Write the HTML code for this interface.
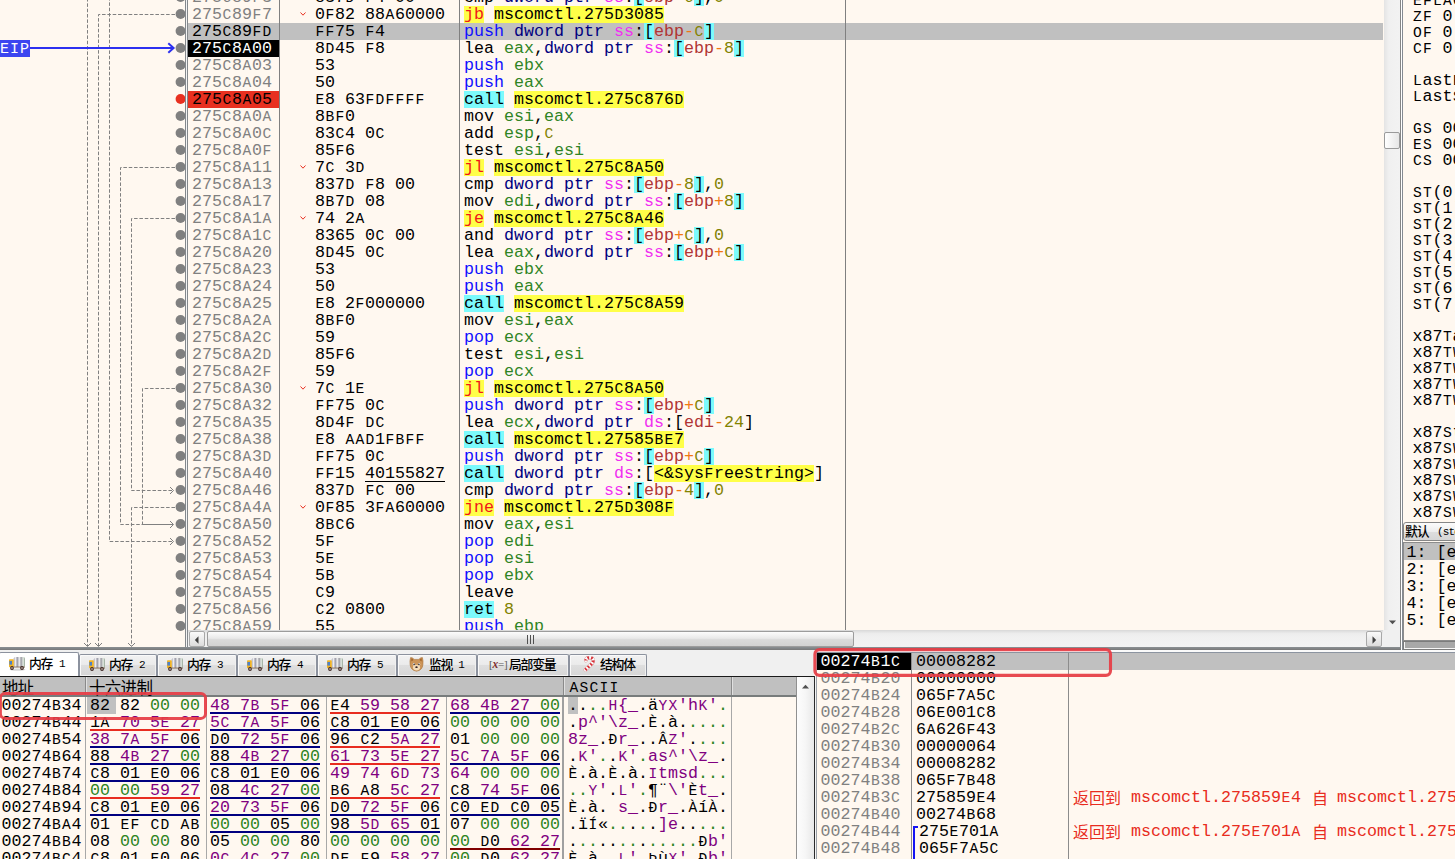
<!DOCTYPE html><html><head><meta charset="utf-8"><title>x32dbg</title><style>
*{box-sizing:border-box}
html,body{margin:0;padding:0}
body{width:1455px;height:859px;overflow:hidden;background:#FFF8F0;position:relative;
 font-family:"Liberation Mono",monospace;font-size:16.67px;color:#000}
.abs{position:absolute}
b{font-weight:normal;font-size:14.6px;letter-spacing:1.24px;position:relative;left:0.55px}
.row{position:absolute;left:0;height:17px;width:1455px}
.c{position:absolute;top:0;height:17px;line-height:17px;overflow:hidden;white-space:pre}
.ad{left:188px;width:91px;padding-left:4px;color:#808080}
.by{left:315px;width:144px}
.di{left:464px;width:381px}
.jm{position:absolute;left:299.7px;top:6.3px;width:6px;height:4px}
.vl{position:absolute;width:1px;background:#808080}
.hl{position:absolute;height:1px;background:#808080}
.b{color:#1010FF}
.r{color:#2F8424}
.m{color:#000080}
.s{color:#F030F0}
.k{background:#7CFAFC}
.y{background:#FFFF48}
.j{background:#FFFF48;color:#F01818}
.e{color:#B03434}
.o{color:#F27711}
.v{color:#828200}
.u{text-decoration:underline;text-underline-offset:4px;text-decoration-thickness:1px}
.reg{position:absolute;left:1412.5px;height:16px;line-height:16px;white-space:pre}
.g{color:#2C8422}
.p{color:#800080}
.dr{position:absolute;left:0;height:17px;width:797px}
.dc{position:absolute;top:0;height:17px;line-height:17px;white-space:pre;overflow:hidden}
.ul{position:absolute;top:15px;height:2px;width:110px}
.sr{position:absolute;left:816px;height:17px;width:639px}
.cjm{font-family:"Liberation Sans","Noto Sans CJK SC",sans-serif;font-weight:500}
.cjr{font-family:"Liberation Sans","Noto Sans CJK SC",sans-serif;font-weight:normal}
</style></head><body>
<div class="abs" style="left:0;top:0;width:1400px;height:630px;overflow:hidden">
<div class="row" style="top:-11px">
<div class="c ad" style="">275<b>C</b>89<b>F</b>3</div>
<div class="c by">837<b>D</b> <b>F</b>4 00</div>
<div class="c di">cmp <span class="m">dword ptr</span> <span class="s">ss</span>:<span class="k">[</span><span class="e">ebp</span><span class="o">-</span><span class="v"><b>C</b></span><span class="k">]</span>,<span class="v">0</span></div>
</div>
<div class="row" style="top:6px">
<div class="c ad" style="">275<b>C</b>89<b>F</b>7</div>
<svg class="jm" viewBox="0 0 6 4"><path d="M0.5 0.5 L3 3.2 L5.5 0.5" fill="none" stroke="#E83020" stroke-width="1"/></svg>
<div class="c by">0<b>F</b>82 88<b>A</b>60000</div>
<div class="c di"><span class="j">jb</span> <span class="y">mscomctl.275<b>D</b>3085</span></div>
</div>
<div class="abs" style="left:188px;top:23px;width:1195px;height:17px;background:#C0C0C0"></div>
<div class="row" style="top:23px">
<div class="c ad" style="color:#000;">275<b>C</b>89<b>FD</b></div>
<div class="c by"><b>FF</b>75 <b>F</b>4</div>
<div class="c di"><span class="b">push</span> <span class="m">dword ptr</span> <span class="s">ss</span>:<span class="k">[</span><span class="e">ebp</span><span class="o">-</span><span class="v"><b>C</b></span><span class="k">]</span></div>
</div>
<div class="row" style="top:40px">
<div class="c ad" style="background:#000;color:#fff;">275<b>C</b>8<b>A</b>00</div>
<div class="c by">8<b>D</b>45 <b>F</b>8</div>
<div class="c di">lea <span class="r">eax</span>,<span class="m">dword ptr</span> <span class="s">ss</span>:<span class="k">[</span><span class="e">ebp</span><span class="o">-</span><span class="v">8</span><span class="k">]</span></div>
</div>
<div class="row" style="top:57px">
<div class="c ad" style="">275<b>C</b>8<b>A</b>03</div>
<div class="c by">53</div>
<div class="c di"><span class="b">push</span> <span class="r">ebx</span></div>
</div>
<div class="row" style="top:74px">
<div class="c ad" style="">275<b>C</b>8<b>A</b>04</div>
<div class="c by">50</div>
<div class="c di"><span class="b">push</span> <span class="r">eax</span></div>
</div>
<div class="row" style="top:91px">
<div class="c ad" style="background:#E83020;color:#000;">275<b>C</b>8<b>A</b>05</div>
<div class="c by"><b>E</b>8 63<b>FDFFFF</b></div>
<div class="c di"><span class="k">call</span> <span class="y">mscomctl.275<b>C</b>876<b>D</b></span></div>
</div>
<div class="row" style="top:108px">
<div class="c ad" style="">275<b>C</b>8<b>A</b>0<b>A</b></div>
<div class="c by">8<b>BF</b>0</div>
<div class="c di">mov <span class="r">esi</span>,<span class="r">eax</span></div>
</div>
<div class="row" style="top:125px">
<div class="c ad" style="">275<b>C</b>8<b>A</b>0<b>C</b></div>
<div class="c by">83<b>C</b>4 0<b>C</b></div>
<div class="c di">add <span class="r">esp</span>,<span class="v"><b>C</b></span></div>
</div>
<div class="row" style="top:142px">
<div class="c ad" style="">275<b>C</b>8<b>A</b>0<b>F</b></div>
<div class="c by">85<b>F</b>6</div>
<div class="c di">test <span class="r">esi</span>,<span class="r">esi</span></div>
</div>
<div class="row" style="top:159px">
<div class="c ad" style="">275<b>C</b>8<b>A</b>11</div>
<svg class="jm" viewBox="0 0 6 4"><path d="M0.5 0.5 L3 3.2 L5.5 0.5" fill="none" stroke="#E83020" stroke-width="1"/></svg>
<div class="c by">7<b>C</b> 3<b>D</b></div>
<div class="c di"><span class="j">jl</span> <span class="y">mscomctl.275<b>C</b>8<b>A</b>50</span></div>
</div>
<div class="row" style="top:176px">
<div class="c ad" style="">275<b>C</b>8<b>A</b>13</div>
<div class="c by">837<b>D</b> <b>F</b>8 00</div>
<div class="c di">cmp <span class="m">dword ptr</span> <span class="s">ss</span>:<span class="k">[</span><span class="e">ebp</span><span class="o">-</span><span class="v">8</span><span class="k">]</span>,<span class="v">0</span></div>
</div>
<div class="row" style="top:193px">
<div class="c ad" style="">275<b>C</b>8<b>A</b>17</div>
<div class="c by">8<b>B</b>7<b>D</b> 08</div>
<div class="c di">mov <span class="r">edi</span>,<span class="m">dword ptr</span> <span class="s">ss</span>:<span class="k">[</span><span class="e">ebp</span><span class="o">+</span><span class="v">8</span><span class="k">]</span></div>
</div>
<div class="row" style="top:210px">
<div class="c ad" style="">275<b>C</b>8<b>A</b>1<b>A</b></div>
<svg class="jm" viewBox="0 0 6 4"><path d="M0.5 0.5 L3 3.2 L5.5 0.5" fill="none" stroke="#E83020" stroke-width="1"/></svg>
<div class="c by">74 2<b>A</b></div>
<div class="c di"><span class="j">je</span> <span class="y">mscomctl.275<b>C</b>8<b>A</b>46</span></div>
</div>
<div class="row" style="top:227px">
<div class="c ad" style="">275<b>C</b>8<b>A</b>1<b>C</b></div>
<div class="c by">8365 0<b>C</b> 00</div>
<div class="c di">and <span class="m">dword ptr</span> <span class="s">ss</span>:<span class="k">[</span><span class="e">ebp</span><span class="o">+</span><span class="v"><b>C</b></span><span class="k">]</span>,<span class="v">0</span></div>
</div>
<div class="row" style="top:244px">
<div class="c ad" style="">275<b>C</b>8<b>A</b>20</div>
<div class="c by">8<b>D</b>45 0<b>C</b></div>
<div class="c di">lea <span class="r">eax</span>,<span class="m">dword ptr</span> <span class="s">ss</span>:<span class="k">[</span><span class="e">ebp</span><span class="o">+</span><span class="v"><b>C</b></span><span class="k">]</span></div>
</div>
<div class="row" style="top:261px">
<div class="c ad" style="">275<b>C</b>8<b>A</b>23</div>
<div class="c by">53</div>
<div class="c di"><span class="b">push</span> <span class="r">ebx</span></div>
</div>
<div class="row" style="top:278px">
<div class="c ad" style="">275<b>C</b>8<b>A</b>24</div>
<div class="c by">50</div>
<div class="c di"><span class="b">push</span> <span class="r">eax</span></div>
</div>
<div class="row" style="top:295px">
<div class="c ad" style="">275<b>C</b>8<b>A</b>25</div>
<div class="c by"><b>E</b>8 2<b>F</b>000000</div>
<div class="c di"><span class="k">call</span> <span class="y">mscomctl.275<b>C</b>8<b>A</b>59</span></div>
</div>
<div class="row" style="top:312px">
<div class="c ad" style="">275<b>C</b>8<b>A</b>2<b>A</b></div>
<div class="c by">8<b>BF</b>0</div>
<div class="c di">mov <span class="r">esi</span>,<span class="r">eax</span></div>
</div>
<div class="row" style="top:329px">
<div class="c ad" style="">275<b>C</b>8<b>A</b>2<b>C</b></div>
<div class="c by">59</div>
<div class="c di"><span class="b">pop</span> <span class="r">ecx</span></div>
</div>
<div class="row" style="top:346px">
<div class="c ad" style="">275<b>C</b>8<b>A</b>2<b>D</b></div>
<div class="c by">85<b>F</b>6</div>
<div class="c di">test <span class="r">esi</span>,<span class="r">esi</span></div>
</div>
<div class="row" style="top:363px">
<div class="c ad" style="">275<b>C</b>8<b>A</b>2<b>F</b></div>
<div class="c by">59</div>
<div class="c di"><span class="b">pop</span> <span class="r">ecx</span></div>
</div>
<div class="row" style="top:380px">
<div class="c ad" style="">275<b>C</b>8<b>A</b>30</div>
<svg class="jm" viewBox="0 0 6 4"><path d="M0.5 0.5 L3 3.2 L5.5 0.5" fill="none" stroke="#E83020" stroke-width="1"/></svg>
<div class="c by">7<b>C</b> 1<b>E</b></div>
<div class="c di"><span class="j">jl</span> <span class="y">mscomctl.275<b>C</b>8<b>A</b>50</span></div>
</div>
<div class="row" style="top:397px">
<div class="c ad" style="">275<b>C</b>8<b>A</b>32</div>
<div class="c by"><b>FF</b>75 0<b>C</b></div>
<div class="c di"><span class="b">push</span> <span class="m">dword ptr</span> <span class="s">ss</span>:<span class="k">[</span><span class="e">ebp</span><span class="o">+</span><span class="v"><b>C</b></span><span class="k">]</span></div>
</div>
<div class="row" style="top:414px">
<div class="c ad" style="">275<b>C</b>8<b>A</b>35</div>
<div class="c by">8<b>D</b>4<b>F</b> <b>DC</b></div>
<div class="c di">lea <span class="r">ecx</span>,<span class="m">dword ptr</span> <span class="s">ds</span>:[<span class="e">edi</span><span class="o">-</span><span class="v">24</span>]</div>
</div>
<div class="row" style="top:431px">
<div class="c ad" style="">275<b>C</b>8<b>A</b>38</div>
<div class="c by"><b>E</b>8 <b>AAD</b>1<b>FBFF</b></div>
<div class="c di"><span class="k">call</span> <span class="y">mscomctl.27585<b>BE</b>7</span></div>
</div>
<div class="row" style="top:448px">
<div class="c ad" style="">275<b>C</b>8<b>A</b>3<b>D</b></div>
<div class="c by"><b>FF</b>75 0<b>C</b></div>
<div class="c di"><span class="b">push</span> <span class="m">dword ptr</span> <span class="s">ss</span>:<span class="k">[</span><span class="e">ebp</span><span class="o">+</span><span class="v"><b>C</b></span><span class="k">]</span></div>
</div>
<div class="row" style="top:465px">
<div class="c ad" style="">275<b>C</b>8<b>A</b>40</div>
<div class="c by"><b>FF</b>15 40155827</div>
<div class="abs" style="left:365px;top:15.7px;width:80px;height:1.1px;background:#000"></div>
<div class="c di"><span class="k">call</span> <span class="m">dword ptr</span> <span class="s">ds</span>:[<span class="y">&lt;&amp;<b>S</b>ys<b>F</b>ree<b>S</b>tring&gt;</span>]</div>
</div>
<div class="row" style="top:482px">
<div class="c ad" style="">275<b>C</b>8<b>A</b>46</div>
<div class="c by">837<b>D</b> <b>FC</b> 00</div>
<div class="c di">cmp <span class="m">dword ptr</span> <span class="s">ss</span>:<span class="k">[</span><span class="e">ebp</span><span class="o">-</span><span class="v">4</span><span class="k">]</span>,<span class="v">0</span></div>
</div>
<div class="row" style="top:499px">
<div class="c ad" style="">275<b>C</b>8<b>A</b>4<b>A</b></div>
<svg class="jm" viewBox="0 0 6 4"><path d="M0.5 0.5 L3 3.2 L5.5 0.5" fill="none" stroke="#E83020" stroke-width="1"/></svg>
<div class="c by">0<b>F</b>85 3<b>FA</b>60000</div>
<div class="c di"><span class="j">jne</span> <span class="y">mscomctl.275<b>D</b>308<b>F</b></span></div>
</div>
<div class="row" style="top:516px">
<div class="c ad" style="">275<b>C</b>8<b>A</b>50</div>
<div class="c by">8<b>BC</b>6</div>
<div class="c di">mov <span class="r">eax</span>,<span class="r">esi</span></div>
</div>
<div class="row" style="top:533px">
<div class="c ad" style="">275<b>C</b>8<b>A</b>52</div>
<div class="c by">5<b>F</b></div>
<div class="c di"><span class="b">pop</span> <span class="r">edi</span></div>
</div>
<div class="row" style="top:550px">
<div class="c ad" style="">275<b>C</b>8<b>A</b>53</div>
<div class="c by">5<b>E</b></div>
<div class="c di"><span class="b">pop</span> <span class="r">esi</span></div>
</div>
<div class="row" style="top:567px">
<div class="c ad" style="">275<b>C</b>8<b>A</b>54</div>
<div class="c by">5<b>B</b></div>
<div class="c di"><span class="b">pop</span> <span class="r">ebx</span></div>
</div>
<div class="row" style="top:584px">
<div class="c ad" style="">275<b>C</b>8<b>A</b>55</div>
<div class="c by"><b>C</b>9</div>
<div class="c di">leave</div>
</div>
<div class="row" style="top:601px">
<div class="c ad" style="">275<b>C</b>8<b>A</b>56</div>
<div class="c by"><b>C</b>2 0800</div>
<div class="c di"><span class="k">ret</span> <span class="v">8</span></div>
</div>
<div class="row" style="top:618px">
<div class="c ad" style="">275<b>C</b>8<b>A</b>59</div>
<div class="c by">55</div>
<div class="c di"><span class="b">push</span> <span class="r">ebp</span></div>
</div>
<div class="vl" style="left:279px;top:0;height:631px"></div>
<div class="vl" style="left:459px;top:0;height:631px"></div>
<div class="vl" style="left:845px;top:0;height:631px"></div>
</div>
<svg class="abs" style="left:0;top:0" width="188" height="648" viewBox="0 0 188 648">
<path d="M87.5 -2 L87.5 646" fill="none" stroke="#808080" stroke-width="1" stroke-dasharray="3.56 1.78" stroke-dashoffset="0"/>
<path d="M84.0 643 L87.5 646.5 L91.0 643" fill="none" stroke="#808080" stroke-width="1"/>
<path d="M175 14.5 L98.5 14.5 L98.5 646" fill="none" stroke="#808080" stroke-width="1" stroke-dasharray="3.56 1.78" stroke-dashoffset="0"/>
<path d="M95.0 643 L98.5 646.5 L102.0 643" fill="none" stroke="#808080" stroke-width="1"/>
<path d="M109.5 -3 L109.5 541.5 L173 541.5" fill="none" stroke="#808080" stroke-width="1" stroke-dasharray="3.56 1.78" stroke-dashoffset="0"/>
<path d="M170 538.0 L173.5 541.5 L170 545.0" fill="none" stroke="#808080" stroke-width="1"/>
<path d="M175 167.5 L120.5 167.5 L120.5 524.5 L173 524.5" fill="none" stroke="#808080" stroke-width="1" stroke-dasharray="3.56 1.78" stroke-dashoffset="0"/>
<path d="M170 521.0 L173.5 524.5 L170 528.0" fill="none" stroke="#808080" stroke-width="1"/>
<path d="M175 218.5 L131.5 218.5 L131.5 490.5 L173 490.5" fill="none" stroke="#808080" stroke-width="1" stroke-dasharray="3.56 1.78" stroke-dashoffset="0"/>
<path d="M170 487.0 L173.5 490.5 L170 494.0" fill="none" stroke="#808080" stroke-width="1"/>
<path d="M175 388.5 L142.5 388.5 L142.5 524.5" fill="none" stroke="#808080" stroke-width="1" stroke-dasharray="3.56 1.78" stroke-dashoffset="0"/>
<path d="M142.5 524.5 L173 524.5" fill="none" stroke="#808080" stroke-width="1"  stroke-dashoffset="0"/>
<path d="M175 507.5 L131.5 507.5 L131.5 646" fill="none" stroke="#808080" stroke-width="1" stroke-dasharray="3.56 1.78" stroke-dashoffset="0"/>
<path d="M128.0 643 L131.5 646.5 L135.0 643" fill="none" stroke="#808080" stroke-width="1"/>
<rect x="0" y="40" width="30" height="17" fill="#3C46F0"/>
<path d="M30 48 L173 48" stroke="#2C30F0" stroke-width="2" fill="none"/>
<path d="M168.3 43.2 L173.6 48 L168.3 52.8" stroke="#2C30F0" stroke-width="2" fill="none"/>
<circle cx="180.6" cy="-3.0" r="5" fill="#808080"/>
<circle cx="180.6" cy="14.0" r="5" fill="#808080"/>
<circle cx="180.6" cy="31.0" r="5" fill="#808080"/>
<circle cx="180.6" cy="48.0" r="5" fill="#808080"/>
<circle cx="180.6" cy="65.0" r="5" fill="#808080"/>
<circle cx="180.6" cy="82.0" r="5" fill="#808080"/>
<circle cx="180.6" cy="99.0" r="5" fill="#E83020"/>
<circle cx="180.6" cy="116.0" r="5" fill="#808080"/>
<circle cx="180.6" cy="133.0" r="5" fill="#808080"/>
<circle cx="180.6" cy="150.0" r="5" fill="#808080"/>
<circle cx="180.6" cy="167.0" r="5" fill="#808080"/>
<circle cx="180.6" cy="184.0" r="5" fill="#808080"/>
<circle cx="180.6" cy="201.0" r="5" fill="#808080"/>
<circle cx="180.6" cy="218.0" r="5" fill="#808080"/>
<circle cx="180.6" cy="235.0" r="5" fill="#808080"/>
<circle cx="180.6" cy="252.0" r="5" fill="#808080"/>
<circle cx="180.6" cy="269.0" r="5" fill="#808080"/>
<circle cx="180.6" cy="286.0" r="5" fill="#808080"/>
<circle cx="180.6" cy="303.0" r="5" fill="#808080"/>
<circle cx="180.6" cy="320.0" r="5" fill="#808080"/>
<circle cx="180.6" cy="337.0" r="5" fill="#808080"/>
<circle cx="180.6" cy="354.0" r="5" fill="#808080"/>
<circle cx="180.6" cy="371.0" r="5" fill="#808080"/>
<circle cx="180.6" cy="388.0" r="5" fill="#808080"/>
<circle cx="180.6" cy="405.0" r="5" fill="#808080"/>
<circle cx="180.6" cy="422.0" r="5" fill="#808080"/>
<circle cx="180.6" cy="439.0" r="5" fill="#808080"/>
<circle cx="180.6" cy="456.0" r="5" fill="#808080"/>
<circle cx="180.6" cy="473.0" r="5" fill="#808080"/>
<circle cx="180.6" cy="490.0" r="5" fill="#808080"/>
<circle cx="180.6" cy="507.0" r="5" fill="#808080"/>
<circle cx="180.6" cy="524.0" r="5" fill="#808080"/>
<circle cx="180.6" cy="541.0" r="5" fill="#808080"/>
<circle cx="180.6" cy="558.0" r="5" fill="#808080"/>
<circle cx="180.6" cy="575.0" r="5" fill="#808080"/>
<circle cx="180.6" cy="592.0" r="5" fill="#808080"/>
<circle cx="180.6" cy="609.0" r="5" fill="#808080"/>
<circle cx="180.6" cy="626.0" r="5" fill="#808080"/>
<rect x="185" y="0" width="1" height="648" fill="#84888C"/>
<rect x="186" y="0" width="1" height="648" fill="#F4F4F4"/>
<rect x="187" y="0" width="1" height="648" fill="#84888C"/>
</svg>
<div class="abs" style="left:0;top:40px;width:30px;height:17px;line-height:19.5px;font-size:15px;letter-spacing:1px;color:#fff;white-space:pre;overflow:hidden">EIP</div>
<div class="abs" style="left:1384px;top:0;width:16px;height:631px;background:linear-gradient(90deg,#E4E4E4,#F0F0F0 30%,#F2F2F2)"></div>
<div class="abs" style="left:1384px;top:132px;width:16px;height:17px;border:1px solid #9A9A9A;border-radius:2px;background:linear-gradient(90deg,#FFFFFF,#E6E6E6)"></div>
<svg class="abs" style="left:1389px;top:619.5px" width="7" height="5"><path d="M0 0.5 H7 L3.5 4.2 Z" fill="#505050"/></svg>
<div class="abs" style="left:188px;top:630px;width:1195px;height:17px;background:linear-gradient(#D8D8D8,#ECECEC 20%,#F0F0F0 40%,#F2F2F2)"></div>
<div class="abs" style="left:1383px;top:630px;width:17px;height:17px;background:#F0F0F0"></div>
<div class="abs" style="left:188.5px;top:631px;width:16.5px;height:16px;border:1px solid #A8A8A8;border-radius:2px;background:linear-gradient(#FAFAFA,#DCDCDC)"></div>
<svg class="abs" style="left:193.5px;top:635.5px" width="5" height="8"><path d="M4.5 0.3 V7.7 L0.8 4 Z" fill="#404040"/></svg>
<div class="abs" style="left:206.5px;top:631px;width:647.5px;height:16px;border:1px solid #9C9C9C;border-radius:2px;background:linear-gradient(#FCFCFC,#E9E9E9 45%,#DADADA 55%,#D2D2D2)"></div>
<div class="abs" style="left:527px;top:635px;width:1.4px;height:9px;background:#505050"></div><div class="abs" style="left:530px;top:635px;width:1.4px;height:9px;background:#505050"></div><div class="abs" style="left:533px;top:635px;width:1.4px;height:9px;background:#505050"></div>
<div class="abs" style="left:1366px;top:631px;width:16px;height:16px;border:1px solid #A8A8A8;border-radius:2px;background:linear-gradient(#FAFAFA,#DCDCDC)"></div>
<svg class="abs" style="left:1372px;top:635.5px" width="5" height="8"><path d="M0.5 0.3 V7.7 L4.2 4 Z" fill="#404040"/></svg>
<div class="abs" style="left:1400px;top:0;width:1px;height:650px;background:#858585"></div>
<div class="abs" style="left:1401px;top:0;width:1px;height:650px;background:#FFFFFF"></div>
<div class="abs" style="left:1402px;top:0;width:1px;height:650px;background:#848A92"></div>
<div class="abs" style="left:1403px;top:0;width:52px;height:522px;overflow:hidden">
<div class="reg" style="left:9.5px;top:-7px"><b>EFLAGS</b></div>
<div class="reg" style="left:9.5px;top:9px"><b>ZF</b> 0</div>
<div class="reg" style="left:9.5px;top:25px"><b>OF</b> 0</div>
<div class="reg" style="left:9.5px;top:41px"><b>CF</b> 0</div>
<div class="reg" style="left:9.5px;top:73px"><b>L</b>ast<b>E</b>rror</div>
<div class="reg" style="left:9.5px;top:89px"><b>L</b>ast<b>S</b>tatus</div>
<div class="reg" style="left:9.5px;top:121px"><b>GS</b> 0000</div>
<div class="reg" style="left:9.5px;top:137px"><b>ES</b> 0023</div>
<div class="reg" style="left:9.5px;top:153px"><b>CS</b> 001<b>B</b></div>
<div class="reg" style="left:9.5px;top:185px"><b>ST</b>(0)</div>
<div class="reg" style="left:9.5px;top:201px"><b>ST</b>(1)</div>
<div class="reg" style="left:9.5px;top:217px"><b>ST</b>(2)</div>
<div class="reg" style="left:9.5px;top:233px"><b>ST</b>(3)</div>
<div class="reg" style="left:9.5px;top:249px"><b>ST</b>(4)</div>
<div class="reg" style="left:9.5px;top:265px"><b>ST</b>(5)</div>
<div class="reg" style="left:9.5px;top:281px"><b>ST</b>(6)</div>
<div class="reg" style="left:9.5px;top:297px"><b>ST</b>(7)</div>
<div class="reg" style="left:9.5px;top:329px">x87<b>T</b>ag<b>W</b>ord</div>
<div class="reg" style="left:9.5px;top:345px">x87<b>TW</b>_0</div>
<div class="reg" style="left:9.5px;top:361px">x87<b>TW</b>_2</div>
<div class="reg" style="left:9.5px;top:377px">x87<b>TW</b>_4</div>
<div class="reg" style="left:9.5px;top:393px">x87<b>TW</b>_6</div>
<div class="reg" style="left:9.5px;top:425px">x87<b>S</b>tatus<b>W</b>ord</div>
<div class="reg" style="left:9.5px;top:441px">x87<b>SW</b>_<b>B</b></div>
<div class="reg" style="left:9.5px;top:457px">x87<b>SW</b>_<b>C</b>1</div>
<div class="reg" style="left:9.5px;top:473px">x87<b>SW</b>_<b>SF</b></div>
<div class="reg" style="left:9.5px;top:489px">x87<b>SW</b>_<b>O</b></div>
<div class="reg" style="left:9.5px;top:505px">x87<b>SW</b>_<b>Z</b></div>
</div>
<div class="abs" style="left:1402.8px;top:522.4px;width:60px;height:19px;border:1px solid #868686;border-radius:3px;background:linear-gradient(#FBFBFB,#EDEDED 50%,#DEDEDE 51%,#D6D6D6)"></div>
<svg class="abs" style="left:1404.8px;top:525.3px;overflow:visible" width="23.6" height="12.8" fill="#000"><text class="cjm" x="0" y="11.264" font-size="12.8" letter-spacing="-1">默认</text></svg>
<div class="abs" style="left:1437px;top:525px;height:14px;line-height:14px;font-size:11px;letter-spacing:-0.9px;white-space:pre">(stdcall)</div>
<div class="abs" style="left:1403px;top:542px;width:60px;height:99px;border:1px solid #8C8C8C;background:#FFF8F0"></div>
<div class="abs" style="left:1404px;top:543px;width:51px;height:17px;background:#C0C0C0"></div>
<div class="c" style="left:1406.5px;top:543px;line-height:19px">1: [esp+0]</div>
<div class="c" style="left:1406.5px;top:560px;line-height:19px">2: [esp+4]</div>
<div class="c" style="left:1406.5px;top:577px;line-height:19px">3: [esp+8]</div>
<div class="c" style="left:1406.5px;top:594px;line-height:19px">4: [esp+C]</div>
<div class="c" style="left:1406.5px;top:611px;line-height:19px">5: [esp+10]</div>
<div class="abs" style="left:1403px;top:640.5px;width:60px;height:9.5px;background:#F6F6F6;border:1px solid #7C7C7C"></div>
<div class="abs" style="left:1405px;top:642.2px;width:60px;height:5.4px;background:#A8A8A8"></div>
<div class="abs" style="left:0;top:647px;width:1401px;height:3px;background:linear-gradient(#8A9094,#787878)"></div>
<div class="abs" style="left:0;top:650px;width:1455px;height:3px;background:#F4F4F4"></div>
<div class="abs" style="left:0;top:650px;width:814px;height:27px;background:#F0F0F0"></div>
<div class="abs" style="left:-1px;top:652px;width:80px;height:24px;background:#FFFFFF;border:1px solid #8C929E;border-bottom:none;border-radius:2px 2px 0 0"></div>
<svg class="abs" style="left:9px;top:657px" width="17" height="14" viewBox="0 0 17 14"><defs><linearGradient id="cg" x1="0" x2="1"><stop offset="0" stop-color="#A8A8B4"/><stop offset="0.16" stop-color="#ECECF0"/><stop offset="0.32" stop-color="#9C9CA8"/><stop offset="0.5" stop-color="#F0F0F0"/><stop offset="0.66" stop-color="#9C9CA4"/><stop offset="0.84" stop-color="#E4ECE4"/><stop offset="1" stop-color="#90A090"/></linearGradient></defs><ellipse cx="8.5" cy="12.6" rx="8" ry="1.2" fill="#D8D8D8"/><rect x="4.7" y="0" width="11.3" height="10" rx="1.6" fill="url(#cg)"/><rect x="0" y="2.3" width="4.8" height="8" rx="0.8" fill="#F0B428"/><rect x="0.4" y="4" width="2.6" height="3.6" fill="#4C80C8"/><rect x="4.7" y="9.6" width="11.3" height="0.9" fill="#806850"/><circle cx="3" cy="11" r="1.9" fill="#3C2420"/><circle cx="3" cy="11" r="0.8" fill="#E8E0D8"/><circle cx="13" cy="11" r="1.9" fill="#3C2420"/><circle cx="13" cy="11" r="0.8" fill="#E8E0D8"/></svg>
<svg class="abs" style="left:29.200000000000003px;top:657.4px;overflow:visible" width="23.2" height="12.8" fill="#000"><text class="cjm" x="0" y="11.264" font-size="12.8" letter-spacing="-1.2">内存</text></svg>
<div class="abs" style="left:58.900000000000006px;top:657px;height:14px;line-height:14px;font-size:11px">1</div>
<div class="abs" style="left:79px;top:654px;width:78px;height:22px;background:linear-gradient(#F2F2F2,#EBEBEB 45%,#DEDEDE 50%,#D6D6D6);border:1px solid #8C929E;border-bottom:none;border-radius:2px 2px 0 0;box-shadow:inset 1px 1px 0 #FAFAFA,inset -1px 0 0 #F0F0F0"></div>
<div class="abs" style="left:80px;top:675px;width:76px;height:1px;background:#F4F4F4"></div>
<svg class="abs" style="left:89px;top:658px" width="17" height="14" viewBox="0 0 17 14"><defs><linearGradient id="cg" x1="0" x2="1"><stop offset="0" stop-color="#A8A8B4"/><stop offset="0.16" stop-color="#ECECF0"/><stop offset="0.32" stop-color="#9C9CA8"/><stop offset="0.5" stop-color="#F0F0F0"/><stop offset="0.66" stop-color="#9C9CA4"/><stop offset="0.84" stop-color="#E4ECE4"/><stop offset="1" stop-color="#90A090"/></linearGradient></defs><ellipse cx="8.5" cy="12.6" rx="8" ry="1.2" fill="#D8D8D8"/><rect x="4.7" y="0" width="11.3" height="10" rx="1.6" fill="url(#cg)"/><rect x="0" y="2.3" width="4.8" height="8" rx="0.8" fill="#F0B428"/><rect x="0.4" y="4" width="2.6" height="3.6" fill="#4C80C8"/><rect x="4.7" y="9.6" width="11.3" height="0.9" fill="#806850"/><circle cx="3" cy="11" r="1.9" fill="#3C2420"/><circle cx="3" cy="11" r="0.8" fill="#E8E0D8"/><circle cx="13" cy="11" r="1.9" fill="#3C2420"/><circle cx="13" cy="11" r="0.8" fill="#E8E0D8"/></svg>
<svg class="abs" style="left:109.19999999999999px;top:658.1px;overflow:visible" width="23.2" height="12.8" fill="#000"><text class="cjm" x="0" y="11.264" font-size="12.8" letter-spacing="-1.2">内存</text></svg>
<div class="abs" style="left:138.9px;top:658px;height:14px;line-height:14px;font-size:11px">2</div>
<div class="abs" style="left:157px;top:654px;width:80px;height:22px;background:linear-gradient(#F2F2F2,#EBEBEB 45%,#DEDEDE 50%,#D6D6D6);border:1px solid #8C929E;border-bottom:none;border-radius:2px 2px 0 0;box-shadow:inset 1px 1px 0 #FAFAFA,inset -1px 0 0 #F0F0F0"></div>
<div class="abs" style="left:158px;top:675px;width:78px;height:1px;background:#F4F4F4"></div>
<svg class="abs" style="left:167px;top:658px" width="17" height="14" viewBox="0 0 17 14"><defs><linearGradient id="cg" x1="0" x2="1"><stop offset="0" stop-color="#A8A8B4"/><stop offset="0.16" stop-color="#ECECF0"/><stop offset="0.32" stop-color="#9C9CA8"/><stop offset="0.5" stop-color="#F0F0F0"/><stop offset="0.66" stop-color="#9C9CA4"/><stop offset="0.84" stop-color="#E4ECE4"/><stop offset="1" stop-color="#90A090"/></linearGradient></defs><ellipse cx="8.5" cy="12.6" rx="8" ry="1.2" fill="#D8D8D8"/><rect x="4.7" y="0" width="11.3" height="10" rx="1.6" fill="url(#cg)"/><rect x="0" y="2.3" width="4.8" height="8" rx="0.8" fill="#F0B428"/><rect x="0.4" y="4" width="2.6" height="3.6" fill="#4C80C8"/><rect x="4.7" y="9.6" width="11.3" height="0.9" fill="#806850"/><circle cx="3" cy="11" r="1.9" fill="#3C2420"/><circle cx="3" cy="11" r="0.8" fill="#E8E0D8"/><circle cx="13" cy="11" r="1.9" fill="#3C2420"/><circle cx="13" cy="11" r="0.8" fill="#E8E0D8"/></svg>
<svg class="abs" style="left:187.2px;top:658.1px;overflow:visible" width="23.2" height="12.8" fill="#000"><text class="cjm" x="0" y="11.264" font-size="12.8" letter-spacing="-1.2">内存</text></svg>
<div class="abs" style="left:216.9px;top:658px;height:14px;line-height:14px;font-size:11px">3</div>
<div class="abs" style="left:237px;top:654px;width:80px;height:22px;background:linear-gradient(#F2F2F2,#EBEBEB 45%,#DEDEDE 50%,#D6D6D6);border:1px solid #8C929E;border-bottom:none;border-radius:2px 2px 0 0;box-shadow:inset 1px 1px 0 #FAFAFA,inset -1px 0 0 #F0F0F0"></div>
<div class="abs" style="left:238px;top:675px;width:78px;height:1px;background:#F4F4F4"></div>
<svg class="abs" style="left:247px;top:658px" width="17" height="14" viewBox="0 0 17 14"><defs><linearGradient id="cg" x1="0" x2="1"><stop offset="0" stop-color="#A8A8B4"/><stop offset="0.16" stop-color="#ECECF0"/><stop offset="0.32" stop-color="#9C9CA8"/><stop offset="0.5" stop-color="#F0F0F0"/><stop offset="0.66" stop-color="#9C9CA4"/><stop offset="0.84" stop-color="#E4ECE4"/><stop offset="1" stop-color="#90A090"/></linearGradient></defs><ellipse cx="8.5" cy="12.6" rx="8" ry="1.2" fill="#D8D8D8"/><rect x="4.7" y="0" width="11.3" height="10" rx="1.6" fill="url(#cg)"/><rect x="0" y="2.3" width="4.8" height="8" rx="0.8" fill="#F0B428"/><rect x="0.4" y="4" width="2.6" height="3.6" fill="#4C80C8"/><rect x="4.7" y="9.6" width="11.3" height="0.9" fill="#806850"/><circle cx="3" cy="11" r="1.9" fill="#3C2420"/><circle cx="3" cy="11" r="0.8" fill="#E8E0D8"/><circle cx="13" cy="11" r="1.9" fill="#3C2420"/><circle cx="13" cy="11" r="0.8" fill="#E8E0D8"/></svg>
<svg class="abs" style="left:267.20000000000005px;top:658.1px;overflow:visible" width="23.2" height="12.8" fill="#000"><text class="cjm" x="0" y="11.264" font-size="12.8" letter-spacing="-1.2">内存</text></svg>
<div class="abs" style="left:296.90000000000003px;top:658px;height:14px;line-height:14px;font-size:11px">4</div>
<div class="abs" style="left:317px;top:654px;width:80px;height:22px;background:linear-gradient(#F2F2F2,#EBEBEB 45%,#DEDEDE 50%,#D6D6D6);border:1px solid #8C929E;border-bottom:none;border-radius:2px 2px 0 0;box-shadow:inset 1px 1px 0 #FAFAFA,inset -1px 0 0 #F0F0F0"></div>
<div class="abs" style="left:318px;top:675px;width:78px;height:1px;background:#F4F4F4"></div>
<svg class="abs" style="left:327px;top:658px" width="17" height="14" viewBox="0 0 17 14"><defs><linearGradient id="cg" x1="0" x2="1"><stop offset="0" stop-color="#A8A8B4"/><stop offset="0.16" stop-color="#ECECF0"/><stop offset="0.32" stop-color="#9C9CA8"/><stop offset="0.5" stop-color="#F0F0F0"/><stop offset="0.66" stop-color="#9C9CA4"/><stop offset="0.84" stop-color="#E4ECE4"/><stop offset="1" stop-color="#90A090"/></linearGradient></defs><ellipse cx="8.5" cy="12.6" rx="8" ry="1.2" fill="#D8D8D8"/><rect x="4.7" y="0" width="11.3" height="10" rx="1.6" fill="url(#cg)"/><rect x="0" y="2.3" width="4.8" height="8" rx="0.8" fill="#F0B428"/><rect x="0.4" y="4" width="2.6" height="3.6" fill="#4C80C8"/><rect x="4.7" y="9.6" width="11.3" height="0.9" fill="#806850"/><circle cx="3" cy="11" r="1.9" fill="#3C2420"/><circle cx="3" cy="11" r="0.8" fill="#E8E0D8"/><circle cx="13" cy="11" r="1.9" fill="#3C2420"/><circle cx="13" cy="11" r="0.8" fill="#E8E0D8"/></svg>
<svg class="abs" style="left:347.20000000000005px;top:658.1px;overflow:visible" width="23.2" height="12.8" fill="#000"><text class="cjm" x="0" y="11.264" font-size="12.8" letter-spacing="-1.2">内存</text></svg>
<div class="abs" style="left:376.90000000000003px;top:658px;height:14px;line-height:14px;font-size:11px">5</div>
<div class="abs" style="left:397px;top:654px;width:80px;height:22px;background:linear-gradient(#F2F2F2,#EBEBEB 45%,#DEDEDE 50%,#D6D6D6);border:1px solid #8C929E;border-bottom:none;border-radius:2px 2px 0 0;box-shadow:inset 1px 1px 0 #FAFAFA,inset -1px 0 0 #F0F0F0"></div>
<div class="abs" style="left:398px;top:675px;width:78px;height:1px;background:#F4F4F4"></div>
<svg class="abs" style="left:409px;top:657px" width="15" height="15" viewBox="0 0 15 15"><path d="M1.6 0.6 Q3.5 0.4 5.2 2.4 H9.8 Q11.5 0.4 13.4 0.6 Q14.4 4 13.9 7.5 Q13.5 13.2 7.5 14.2 Q1.5 13.2 1.1 7.5 Q0.6 4 1.6 0.6 Z" fill="#CC9458" stroke="#A87038" stroke-width="0.6"/><path d="M2.2 1.6 Q3.4 1.6 4.4 3 L2.4 4.6 Z M12.8 1.6 Q11.6 1.6 10.6 3 L12.6 4.6 Z" fill="#A06428"/><ellipse cx="7.5" cy="10.6" rx="3.6" ry="2.8" fill="#F4DCB8"/><ellipse cx="4.9" cy="7.2" rx="1" ry="1.2" fill="#FFFFFF"/><ellipse cx="10.1" cy="7.2" rx="1" ry="1.2" fill="#FFFFFF"/><circle cx="5.1" cy="7.4" r="0.8" fill="#282020"/><circle cx="9.9" cy="7.4" r="0.8" fill="#282020"/><ellipse cx="7.5" cy="10.2" rx="1.2" ry="0.9" fill="#302028"/></svg>
<svg class="abs" style="left:428.6px;top:658.1px;overflow:visible" width="23.2" height="12.8" fill="#000"><text class="cjm" x="0" y="11.264" font-size="12.8" letter-spacing="-1.2">监视</text></svg>
<div class="abs" style="left:458.3px;top:658px;height:14px;line-height:14px;font-size:11px">1</div>
<div class="abs" style="left:477px;top:654px;width:92px;height:22px;background:linear-gradient(#F2F2F2,#EBEBEB 45%,#DEDEDE 50%,#D6D6D6);border:1px solid #8C929E;border-bottom:none;border-radius:2px 2px 0 0;box-shadow:inset 1px 1px 0 #FAFAFA,inset -1px 0 0 #F0F0F0"></div>
<div class="abs" style="left:478px;top:675px;width:90px;height:1px;background:#F4F4F4"></div>
<div class="abs" style="left:489px;top:656px;height:16px;line-height:16px;font-family:'Liberation Serif',serif;font-size:11px;letter-spacing:-0.2px;color:#585858;white-space:pre">[<i style="color:#803030;font-weight:bold;font-size:11.5px">x</i>=]</div>
<svg class="abs" style="left:508.6px;top:658.1px;overflow:visible" width="46.4" height="12.8" fill="#000"><text class="cjm" x="0" y="11.264" font-size="12.8" letter-spacing="-1.2">局部变量</text></svg>
<div class="abs" style="left:569px;top:654px;width:78px;height:22px;background:linear-gradient(#F2F2F2,#EBEBEB 45%,#DEDEDE 50%,#D6D6D6);border:1px solid #8C929E;border-bottom:none;border-radius:2px 2px 0 0;box-shadow:inset 1px 1px 0 #FAFAFA,inset -1px 0 0 #F0F0F0"></div>
<div class="abs" style="left:570px;top:675px;width:76px;height:1px;background:#F4F4F4"></div>
<svg class="abs" style="left:582px;top:656.3px" width="14" height="17" viewBox="0 0 14 17"><path d="M3.8 4.6 C3.8 0.8 11.4 0.4 11.2 4.8 C11.1 6.8 9.5 8 8 9.4 L3.4 13.8" fill="none" stroke="#D8A0A0" stroke-width="3.8" stroke-linecap="round"/><path d="M3.8 4.6 C3.8 0.8 11.4 0.4 11.2 4.8 C11.1 6.8 9.5 8 8 9.4 L3.4 13.8" fill="none" stroke="#FCFCFC" stroke-width="3" stroke-linecap="round"/><path d="M3.8 4.6 C3.8 0.8 11.4 0.4 11.2 4.8 C11.1 6.8 9.5 8 8 9.4 L3.4 13.8" fill="none" stroke="#D83038" stroke-width="3" stroke-dasharray="1.8 1.8" stroke-dashoffset="0.6"/></svg>
<svg class="abs" style="left:600.4px;top:658.1px;overflow:visible" width="34.8" height="12.8" fill="#000"><text class="cjm" x="0" y="11.264" font-size="12.8" letter-spacing="-1.2">结构体</text></svg>
<div class="abs" style="left:0;top:676px;width:814px;height:1px;background:#1A1A1A"></div>
<div class="abs" style="left:0;top:677px;width:797px;height:20px;background:#C0C0C0"></div>
<div class="abs" style="left:85px;top:677px;width:1px;height:19px;background:#8A8A8A"></div>
<div class="abs" style="left:86px;top:677px;width:1px;height:19px;background:#E0E0E0"></div>
<div class="abs" style="left:563px;top:677px;width:1px;height:19px;background:#8A8A8A"></div>
<div class="abs" style="left:564px;top:677px;width:1px;height:19px;background:#E0E0E0"></div>
<div class="abs" style="left:731px;top:677px;width:1px;height:19px;background:#8A8A8A"></div>
<div class="abs" style="left:732px;top:677px;width:1px;height:19px;background:#E0E0E0"></div>
<div class="abs" style="left:796px;top:677px;width:1px;height:19px;background:#8A8A8A"></div>
<div class="abs" style="left:797px;top:677px;width:1px;height:19px;background:#E0E0E0"></div>
<div class="abs" style="left:0;top:695.3px;width:797px;height:1.3px;background:#787C7C"></div>
<svg class="abs" style="left:1.5px;top:678.5px;overflow:visible" width="31" height="16.5" fill="#000"><text class="cjr" x="0" y="14.52" font-size="16.5" letter-spacing="-1">地址</text></svg>
<svg class="abs" style="left:89px;top:678.5px;overflow:visible" width="63.2" height="16.5" fill="#000"><text class="cjr" x="0" y="14.52" font-size="16.5" letter-spacing="-0.7">十六进制</text></svg>
<div class="abs" style="left:569px;top:679px;height:17px;line-height:17px;white-space:pre"><b>ASCII</b></div>
<div class="abs" style="left:0;top:697px;width:797px;height:162px;overflow:hidden">
<div class="dr" style="top:0px">
<div class="dc" style="left:1.5px;width:83px">00274<b>B</b>34</div>
<div class="abs" style="left:86.5px;top:0;width:29.5px;height:17px;background:#C0C0C0"></div>
<div class="dc" style="left:90px;width:112px">82 82 <span class="g">00</span> <span class="g">00</span></div>
<div class="dc" style="left:210px;width:112px"><span class="p">48</span> <span class="p">7<b>B</b></span> <span class="p">5<b>F</b></span> 06</div>
<div class="ul" style="left:210px;background:#000080"></div>
<div class="dc" style="left:330px;width:112px"><b>E</b>4 <span class="p">59</span> <span class="p">58</span> <span class="p">27</span></div>
<div class="ul" style="left:330px;background:#E82C20"></div>
<div class="dc" style="left:450px;width:112px"><span class="p">68</span> <span class="p">4<b>B</b></span> <span class="p">27</span> <span class="g">00</span></div>
<div class="ul" style="left:450px;background:#000080"></div>
<div class="abs" style="left:568px;top:0;width:10px;height:17px;background:#C0C0C0"></div>
<div class="dc" style="left:568px;width:163px;overflow:visible">..<span class="g">.</span><span class="g">.</span><span class="p"><b>H</b></span><span class="p">{</span><span class="p">_</span>.ä<span class="p"><b>Y</b></span><span class="p"><b>X</b></span><span class="p">&#x27;</span><span class="p">h</span><span class="p"><b>K</b></span><span class="p">&#x27;</span><span class="g">.</span></div>
</div>
<div class="dr" style="top:17px">
<div class="dc" style="left:1.5px;width:83px">00274<b>B</b>44</div>
<div class="dc" style="left:90px;width:112px">1<b>A</b> <span class="p">70</span> <span class="p">5<b>E</b></span> <span class="p">27</span></div>
<div class="ul" style="left:90px;background:#E82C20"></div>
<div class="dc" style="left:210px;width:112px"><span class="p">5<b>C</b></span> <span class="p">7<b>A</b></span> <span class="p">5<b>F</b></span> 06</div>
<div class="ul" style="left:210px;background:#000080"></div>
<div class="dc" style="left:330px;width:112px"><b>C</b>8 01 <b>E</b>0 06</div>
<div class="ul" style="left:330px;background:#000080"></div>
<div class="dc" style="left:450px;width:112px"><span class="g">00</span> <span class="g">00</span> <span class="g">00</span> <span class="g">00</span></div>
<div class="dc" style="left:568px;width:163px;overflow:visible">.<span class="p">p</span><span class="p">^</span><span class="p">&#x27;</span><span class="p">\</span><span class="p">z</span><span class="p">_</span>.<b>È</b>.à.<span class="g">.</span><span class="g">.</span><span class="g">.</span><span class="g">.</span></div>
</div>
<div class="dr" style="top:34px">
<div class="dc" style="left:1.5px;width:83px">00274<b>B</b>54</div>
<div class="dc" style="left:90px;width:112px"><span class="p">38</span> <span class="p">7<b>A</b></span> <span class="p">5<b>F</b></span> 06</div>
<div class="ul" style="left:90px;background:#000080"></div>
<div class="dc" style="left:210px;width:112px"><b>D</b>0 <span class="p">72</span> <span class="p">5<b>F</b></span> 06</div>
<div class="ul" style="left:210px;background:#000080"></div>
<div class="dc" style="left:330px;width:112px">96 <b>C</b>2 <span class="p">5<b>A</b></span> <span class="p">27</span></div>
<div class="ul" style="left:330px;background:#E82C20"></div>
<div class="dc" style="left:450px;width:112px">01 <span class="g">00</span> <span class="g">00</span> <span class="g">00</span></div>
<div class="dc" style="left:568px;width:163px;overflow:visible"><span class="p">8</span><span class="p">z</span><span class="p">_</span>.<b>Ð</b><span class="p">r</span><span class="p">_</span>..<b>Â</b><span class="p"><b>Z</b></span><span class="p">&#x27;</span>.<span class="g">.</span><span class="g">.</span><span class="g">.</span></div>
</div>
<div class="dr" style="top:51px">
<div class="dc" style="left:1.5px;width:83px">00274<b>B</b>64</div>
<div class="dc" style="left:90px;width:112px">88 <span class="p">4<b>B</b></span> <span class="p">27</span> <span class="g">00</span></div>
<div class="ul" style="left:90px;background:#000080"></div>
<div class="dc" style="left:210px;width:112px">88 <span class="p">4<b>B</b></span> <span class="p">27</span> <span class="g">00</span></div>
<div class="ul" style="left:210px;background:#000080"></div>
<div class="dc" style="left:330px;width:112px"><span class="p">61</span> <span class="p">73</span> <span class="p">5<b>E</b></span> <span class="p">27</span></div>
<div class="ul" style="left:330px;background:#E82C20"></div>
<div class="dc" style="left:450px;width:112px"><span class="p">5<b>C</b></span> <span class="p">7<b>A</b></span> <span class="p">5<b>F</b></span> 06</div>
<div class="ul" style="left:450px;background:#000080"></div>
<div class="dc" style="left:568px;width:163px;overflow:visible">.<span class="p"><b>K</b></span><span class="p">&#x27;</span><span class="g">.</span>.<span class="p"><b>K</b></span><span class="p">&#x27;</span><span class="g">.</span><span class="p">a</span><span class="p">s</span><span class="p">^</span><span class="p">&#x27;</span><span class="p">\</span><span class="p">z</span><span class="p">_</span>.</div>
</div>
<div class="dr" style="top:68px">
<div class="dc" style="left:1.5px;width:83px">00274<b>B</b>74</div>
<div class="dc" style="left:90px;width:112px"><b>C</b>8 01 <b>E</b>0 06</div>
<div class="ul" style="left:90px;background:#000080"></div>
<div class="dc" style="left:210px;width:112px"><b>C</b>8 01 <b>E</b>0 06</div>
<div class="ul" style="left:210px;background:#000080"></div>
<div class="dc" style="left:330px;width:112px"><span class="p">49</span> <span class="p">74</span> <span class="p">6<b>D</b></span> <span class="p">73</span></div>
<div class="dc" style="left:450px;width:112px"><span class="p">64</span> <span class="g">00</span> <span class="g">00</span> <span class="g">00</span></div>
<div class="dc" style="left:568px;width:163px;overflow:visible"><b>È</b>.à.<b>È</b>.à.<span class="p"><b>I</b></span><span class="p">t</span><span class="p">m</span><span class="p">s</span><span class="p">d</span><span class="g">.</span><span class="g">.</span><span class="g">.</span></div>
</div>
<div class="dr" style="top:85px">
<div class="dc" style="left:1.5px;width:83px">00274<b>B</b>84</div>
<div class="dc" style="left:90px;width:112px"><span class="g">00</span> <span class="g">00</span> <span class="p">59</span> <span class="p">27</span></div>
<div class="ul" style="left:90px;background:#E82C20"></div>
<div class="dc" style="left:210px;width:112px">08 <span class="p">4<b>C</b></span> <span class="p">27</span> <span class="g">00</span></div>
<div class="ul" style="left:210px;background:#000080"></div>
<div class="dc" style="left:330px;width:112px"><b>B</b>6 <b>A</b>8 <span class="p">5<b>C</b></span> <span class="p">27</span></div>
<div class="ul" style="left:330px;background:#E82C20"></div>
<div class="dc" style="left:450px;width:112px"><b>C</b>8 <span class="p">74</span> <span class="p">5<b>F</b></span> 06</div>
<div class="ul" style="left:450px;background:#000080"></div>
<div class="dc" style="left:568px;width:163px;overflow:visible"><span class="g">.</span><span class="g">.</span><span class="p"><b>Y</b></span><span class="p">&#x27;</span>.<span class="p"><b>L</b></span><span class="p">&#x27;</span><span class="g">.</span>¶¨<span class="p">\</span><span class="p">&#x27;</span><b>È</b><span class="p">t</span><span class="p">_</span>.</div>
</div>
<div class="dr" style="top:102px">
<div class="dc" style="left:1.5px;width:83px">00274<b>B</b>94</div>
<div class="dc" style="left:90px;width:112px"><b>C</b>8 01 <b>E</b>0 06</div>
<div class="ul" style="left:90px;background:#000080"></div>
<div class="dc" style="left:210px;width:112px"><span class="p">20</span> <span class="p">73</span> <span class="p">5<b>F</b></span> 06</div>
<div class="ul" style="left:210px;background:#000080"></div>
<div class="dc" style="left:330px;width:112px"><b>D</b>0 <span class="p">72</span> <span class="p">5<b>F</b></span> 06</div>
<div class="ul" style="left:330px;background:#000080"></div>
<div class="dc" style="left:450px;width:112px"><b>C</b>0 <b>ED</b> <b>C</b>0 05</div>
<div class="ul" style="left:450px;background:#000080"></div>
<div class="dc" style="left:568px;width:163px;overflow:visible"><b>È</b>.à.<span class="p"> </span><span class="p">s</span><span class="p">_</span>.<b>Ð</b><span class="p">r</span><span class="p">_</span>.<b>À</b>í<b>À</b>.</div>
</div>
<div class="dr" style="top:119px">
<div class="dc" style="left:1.5px;width:83px">00274<b>BA</b>4</div>
<div class="dc" style="left:90px;width:112px">01 <b>EF</b> <b>CD</b> <b>AB</b></div>
<div class="dc" style="left:210px;width:112px"><span class="g">00</span> <span class="g">00</span> 05 <span class="g">00</span></div>
<div class="ul" style="left:210px;background:#000080"></div>
<div class="dc" style="left:330px;width:112px">98 <span class="p">5<b>D</b></span> <span class="p">65</span> 01</div>
<div class="ul" style="left:330px;background:#000080"></div>
<div class="dc" style="left:450px;width:112px">07 <span class="g">00</span> <span class="g">00</span> <span class="g">00</span></div>
<div class="dc" style="left:568px;width:163px;overflow:visible">.ï<b>Í</b>«<span class="g">.</span><span class="g">.</span>.<span class="g">.</span>.<span class="p">]</span><span class="p">e</span>..<span class="g">.</span><span class="g">.</span><span class="g">.</span></div>
</div>
<div class="dr" style="top:136px">
<div class="dc" style="left:1.5px;width:83px">00274<b>BB</b>4</div>
<div class="dc" style="left:90px;width:112px">08 <span class="g">00</span> <span class="g">00</span> 80</div>
<div class="dc" style="left:210px;width:112px">05 <span class="g">00</span> <span class="g">00</span> 80</div>
<div class="dc" style="left:330px;width:112px"><span class="g">00</span> <span class="g">00</span> <span class="g">00</span> <span class="g">00</span></div>
<div class="dc" style="left:450px;width:112px"><span class="g">00</span> <b>D</b>0 <span class="p">62</span> <span class="p">27</span></div>
<div class="ul" style="left:450px;background:#800000"></div>
<div class="dc" style="left:568px;width:163px;overflow:visible">.<span class="g">.</span><span class="g">.</span>..<span class="g">.</span><span class="g">.</span>.<span class="g">.</span><span class="g">.</span><span class="g">.</span><span class="g">.</span><span class="g">.</span><b>Ð</b><span class="p">b</span><span class="p">&#x27;</span></div>
</div>
<div class="dr" style="top:153px">
<div class="dc" style="left:1.5px;width:83px">00274<b>BC</b>4</div>
<div class="dc" style="left:90px;width:112px"><b>C</b>8 01 <b>E</b>0 06</div>
<div class="ul" style="left:90px;background:#000080"></div>
<div class="dc" style="left:210px;width:112px"><span class="p">0<b>C</b></span> <span class="p">4<b>C</b></span> <span class="p">27</span> <span class="g">00</span></div>
<div class="ul" style="left:210px;background:#000080"></div>
<div class="dc" style="left:330px;width:112px"><b>DE</b> <b>F</b>9 <span class="p">58</span> <span class="p">27</span></div>
<div class="ul" style="left:330px;background:#E82C20"></div>
<div class="dc" style="left:450px;width:112px"><span class="g">00</span> <b>D</b>0 <span class="p">62</span> <span class="p">27</span></div>
<div class="ul" style="left:450px;background:#800000"></div>
<div class="dc" style="left:568px;width:163px;overflow:visible"><b>È</b>.à..<span class="p"><b>L</b></span><span class="p">&#x27;</span><span class="g">.</span><b>Þ</b>ù<span class="p"><b>X</b></span><span class="p">&#x27;</span><span class="g">.</span><b>Ð</b><span class="p">b</span><span class="p">&#x27;</span></div>
</div>
<div class="abs" style="left:85px;top:0;width:1px;height:162px;background:#A8A8A8"></div>
<div class="abs" style="left:206px;top:0;width:1px;height:162px;background:#A8A8A8"></div>
<div class="abs" style="left:326px;top:0;width:1px;height:162px;background:#A8A8A8"></div>
<div class="abs" style="left:446px;top:0;width:1px;height:162px;background:#A8A8A8"></div>
<div class="abs" style="left:731px;top:0;width:1px;height:162px;background:#A8A8A8"></div>
<div class="abs" style="left:562px;top:0;width:2px;height:162px;background:#A0A0A0"></div>
</div>
<div class="abs" style="left:797px;top:677px;width:17px;height:182px;background:linear-gradient(90deg,#FDFDFD,#F6F6F6 50%,#E8E8E8)"></div>
<div class="abs" style="left:796px;top:677px;width:1px;height:182px;background:#909090"></div>
<svg class="abs" style="left:802px;top:683.5px" width="7" height="5"><path d="M0 4.5 H7 L3.5 0.8 Z" fill="#505050"/></svg>
<div class="abs" style="left:797px;top:676px;width:17px;height:1px;background:#1A1A1A"></div>
<div class="abs" style="left:814px;top:676px;width:1px;height:183px;background:#2A2A2A"></div>
<div class="abs" style="left:815px;top:650px;width:1px;height:209px;background:#F4F4F4"></div>
<div class="abs" style="left:816px;top:650px;width:639px;height:209px;background:#FFF8F0"></div>
<div class="abs" style="left:816px;top:650px;width:639px;height:3px;background:#FAFAFA"></div>
<div class="abs" style="left:816px;top:652px;width:639px;height:1px;background:#8C94A0"></div>
<div class="abs" style="left:816px;top:652px;width:1px;height:207px;background:#9AA0A8"></div>
<div class="abs" style="left:911px;top:653px;width:544px;height:17px;background:#C0C0C0"></div>
<div class="c" style="left:817px;top:653px;width:94px;padding-left:3.5px;background:#000;color:#fff">00274<b>B</b>1<b>C</b></div>
<div class="c" style="left:916px;top:653px;width:100px">00008282</div>
<div class="c" style="left:817px;top:670px;width:94px;padding-left:3.5px;color:#808080">00274<b>B</b>20</div>
<div class="c" style="left:916px;top:670px;width:100px">00000000</div>
<div class="c" style="left:817px;top:687px;width:94px;padding-left:3.5px;color:#808080">00274<b>B</b>24</div>
<div class="c" style="left:916px;top:687px;width:100px">065<b>F</b>7<b>A</b>5<b>C</b></div>
<div class="c" style="left:817px;top:704px;width:94px;padding-left:3.5px;color:#808080">00274<b>B</b>28</div>
<div class="c" style="left:916px;top:704px;width:100px">06<b>E</b>001<b>C</b>8</div>
<div class="c" style="left:817px;top:721px;width:94px;padding-left:3.5px;color:#808080">00274<b>B</b>2<b>C</b></div>
<div class="c" style="left:916px;top:721px;width:100px">6<b>A</b>626<b>F</b>43</div>
<div class="c" style="left:817px;top:738px;width:94px;padding-left:3.5px;color:#808080">00274<b>B</b>30</div>
<div class="c" style="left:916px;top:738px;width:100px">00000064</div>
<div class="c" style="left:817px;top:755px;width:94px;padding-left:3.5px;color:#808080">00274<b>B</b>34</div>
<div class="c" style="left:916px;top:755px;width:100px">00008282</div>
<div class="c" style="left:817px;top:772px;width:94px;padding-left:3.5px;color:#808080">00274<b>B</b>38</div>
<div class="c" style="left:916px;top:772px;width:100px">065<b>F</b>7<b>B</b>48</div>
<div class="c" style="left:817px;top:789px;width:94px;padding-left:3.5px;color:#808080">00274<b>B</b>3<b>C</b></div>
<div class="c" style="left:916px;top:789px;width:100px">275859<b>E</b>4</div>
<svg class="abs" style="left:1073px;top:789.5px;overflow:visible" width="48" height="16" fill="#E82C20"><text class="cjr" x="0" y="14.08" font-size="16">返回到</text></svg>
<div class="c" style="left:1131px;top:789px;width:330px;color:#E82C20">mscomctl.275859<b>E</b>4</div>
<svg class="abs" style="left:1311.5px;top:789.5px;overflow:visible" width="16" height="16" fill="#E82C20"><text class="cjr" x="0" y="14.08" font-size="16">自</text></svg>
<div class="c" style="left:1337px;top:789px;width:130px;color:#E82C20">mscomctl.275<b>C</b>8<b>A</b>05</div>
<div class="c" style="left:817px;top:806px;width:94px;padding-left:3.5px;color:#808080">00274<b>B</b>40</div>
<div class="c" style="left:916px;top:806px;width:100px">00274<b>B</b>68</div>
<div class="c" style="left:817px;top:823px;width:94px;padding-left:3.5px;color:#808080">00274<b>B</b>44</div>
<div class="c" style="left:919px;top:823px;width:100px">275<b>E</b>701<b>A</b></div>
<svg class="abs" style="left:1073px;top:823.5px;overflow:visible" width="48" height="16" fill="#E82C20"><text class="cjr" x="0" y="14.08" font-size="16">返回到</text></svg>
<div class="c" style="left:1131px;top:823px;width:330px;color:#E82C20">mscomctl.275<b>E</b>701<b>A</b></div>
<svg class="abs" style="left:1311.5px;top:823.5px;overflow:visible" width="16" height="16" fill="#E82C20"><text class="cjr" x="0" y="14.08" font-size="16">自</text></svg>
<div class="c" style="left:1337px;top:823px;width:130px;color:#E82C20">mscomctl.275<b>C</b>8<b>A</b>05</div>
<div class="c" style="left:817px;top:840px;width:94px;padding-left:3.5px;color:#808080">00274<b>B</b>48</div>
<div class="c" style="left:919px;top:840px;width:100px">065<b>F</b>7<b>A</b>5<b>C</b></div>
<div class="c" style="left:817px;top:857px;width:94px;padding-left:3.5px;color:#808080">00274<b>B</b>4<b>C</b></div>
<div class="c" style="left:919px;top:857px;width:100px">06<b>E</b>001<b>C</b>8</div>
<div class="abs" style="left:911px;top:653px;width:1px;height:206px;background:#8C8C8C"></div>
<div class="abs" style="left:1068px;top:653px;width:1px;height:206px;background:#8C8C8C"></div>
<div class="abs" style="left:912.8px;top:826px;width:2.3px;height:33px;background:#1414F4"></div>
<div class="abs" style="left:912.8px;top:826px;width:5.2px;height:2px;background:#1414F4"></div>
<svg class="abs" style="left:0;top:688px" width="212" height="36"><rect x="0.4" y="5.5" width="205.1" height="24.9" rx="4.6" fill="none" stroke="#E63C45" stroke-width="3" stroke-opacity="0.93"/></svg>
<svg class="abs" style="left:810px;top:644px" width="306" height="38"><rect x="4.9" y="5.6" width="295.6" height="25.8" rx="4.6" fill="none" stroke="#E63C45" stroke-width="3.1" stroke-opacity="0.93"/></svg>
</body></html>
